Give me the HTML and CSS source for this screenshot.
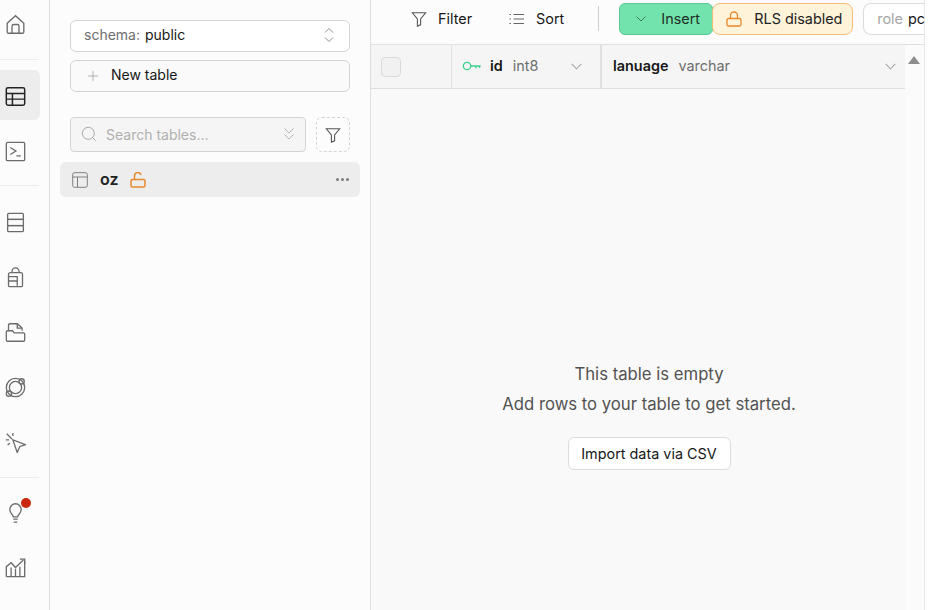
FILE: index.html
```html
<!DOCTYPE html>
<html lang="en">
<head>
<meta charset="utf-8">
<title>Table editor</title>
<link rel="stylesheet" href="styles.css">
</head>
<body>
<div class="app">
  <nav class="rail">
    <div class="rail-group first">
      <a class="rail-item"><svg viewBox="0 0 24 24" class="ri"><path d="M2.500 10.500 12 2l9.500 8.500V20.500a1.500 1.500 0 0 1-1.500 1.500H4a1.500 1.500 0 0 1-1.500-1.500z"/><path d="M8 22v-8a2 2 0 0 1 2-2h4a2 2 0 0 1 2 2v8"/></svg></a>
    </div>
    <div class="rail-group g2">
      <a class="rail-item active"><svg viewBox="0 0 24 24" class="ri dark"><rect x="1.500" y="2" width="21" height="20" rx="2"/><path d="M1.500 8.500h21M1.500 15h21M8.500 8.500V22"/></svg></a>
      <a class="rail-item"><svg viewBox="0 0 24 24" class="ri"><rect x="1.500" y="1.500" width="21" height="21" rx="1.500"/><path d="m6 7.500 6.500 4-6.500 4M13 17h5"/></svg></a>
    </div>
    <div class="rail-group g3">
      <a class="rail-item"><svg viewBox="0 0 24 24" class="ri"><rect x="3" y="1.500" width="18" height="7" rx="1.500"/><rect x="3" y="8.500" width="18" height="7"/><rect x="3" y="15.500" width="18" height="7" rx="1.500"/></svg></a>
      <a class="rail-item"><svg viewBox="0 0 24 24" class="ri"><path d="M8 6.500V5a4 4 0 0 1 8 0v1.500"/><path d="M4 21V8.500a2 2 0 0 1 2-2h12a2 2 0 0 1 2 2V21a1.500 1.500 0 0 1-1.500 1.500H5.500A1.500 1.500 0 0 1 4 21z"/><path d="M4 11h10v10.500M4 16h10"/></svg></a>
      <a class="rail-item"><svg viewBox="0 0 24 24" class="ri"><path d="M4 9V3.500A1.500 1.500 0 0 1 5.500 2H14l5.500 5v3"/><path d="M14 2v5h5.500"/><path d="M1.500 11.500A1.500 1.500 0 0 1 3 10h5.500l2 2.500H21a1.500 1.500 0 0 1 1.500 1.500v6.500A1.500 1.500 0 0 1 21 22H3a1.500 1.500 0 0 1-1.500-1.500z"/></svg></a>
      <a class="rail-item"><svg viewBox="0 0 24 24" class="ri"><circle cx="12" cy="12" r="10.500"/><circle cx="12" cy="12" r="7"/><circle cx="19" cy="5" r="3"/><circle cx="4.500" cy="19" r="3"/></svg></a>
      <a class="rail-item"><svg viewBox="0 0 24 24" class="ri"><path d="m9 9 14.500 5.500-6.500 2-3 7z"/><path d="M8 8 2 2M9 4.500V1M4.500 9H1M5.500 12.500 3 15"/></svg></a>
    </div>
    <div class="rail-group last">
      <a class="rail-item"><span class="bulb"><svg viewBox="0 0 24 24" class="ri"><path d="M9.500 17c0-2.500-4-4-4-8.500a6.500 6.500 0 0 1 13 0c0 4.500-4 6-4 8.500z"/><path d="M9.500 19.500h5M10 23h4"/></svg><i class="dot"></i></span></a>
      <a class="rail-item"><svg viewBox="0 0 24 24" class="ri"><path d="M1.500 22.500V11l5.500-4.500 5 5.500 9-8.500"/><path d="M1.500 22.500h21V5"/><path d="M17 2.500h5.500V8M7 22.500V12M12 22.500V13.500M17 22.500V11"/></svg></a>
    </div>
  </nav>

  <aside class="side">
    <div class="select"><span class="muted">schema:</span><span class="val">public</span>
      <svg viewBox="0 0 12 18" class="updown"><path d="m2 6.500 4-4 4 4M2 11.500l4 4 4-4"/></svg></div>
    <div class="new"><svg viewBox="0 0 14 14" class="plus"><path d="M7 1v12M1 7h12"/></svg><span>New table</span></div>
    <div class="search-row">
      <div class="search"><svg viewBox="0 0 16 16" class="mag"><circle cx="7.300" cy="7.300" r="6"/><path d="m11.800 11.800 3 3"/></svg><span>Search tables...</span>
        <svg viewBox="0 0 12 14" class="dbl"><path d="m1.500 1.500 4.500 4.500 4.500-4.500M1.500 7.500 6 12l4.500-4.500"/></svg></div>
      <div class="filter-btn"><svg viewBox="0 0 18 18" class="fil"><path d="M1.500 2h15l-5.700 7v6.500l-3.600 1.500V9z"/></svg></div>
    </div>
    <div class="tbl-row">
      <svg viewBox="0 0 16 16" class="tic"><rect x=".7" y=".7" width="14.600" height="14.600" rx="1.800"/><path d="M.7 5h14.600M5.500 5v10.300"/></svg>
      <span class="tname">oz</span>
      <svg viewBox="0 0 16 16" class="lock-o"><path d="M4.500 7.500V4a3.300 3.300 0 0 1 6.500-1"/><rect x="1" y="7.500" width="14" height="7.500" rx="1.500"/></svg>
      <span class="more"><i></i><i></i><i></i></span>
    </div>
  </aside>

  <main class="main">
    <header class="toolbar">
      <a class="tool"><svg viewBox="0 0 18 18" class="fil"><path d="M1.500 2h15l-5.700 7v6.500l-3.600 1.500V9z"/></svg>Filter</a>
      <a class="tool sort"><svg viewBox="0 0 16 12" class="lines"><path d="M4.500 1.500H15M4.500 6H15M4.500 10.500H15M.5 1.500h1.500M.5 6h1.500M.5 10.500h1.500"/></svg>Sort</a>
      <span class="sep"></span>
      <a class="insert"><svg viewBox="0 0 10 6" class="chev"><path d="m.5.5 4.500 4.500L9.500.5"/></svg>Insert</a>
      <a class="rls"><svg viewBox="0 0 16 16" class="lock-c"><path d="M4.500 7.500V4.500a3.500 3.500 0 0 1 7 0v3"/><rect x="1" y="7.500" width="14" height="7.500" rx="1.500"/></svg>RLS disabled</a>
      <a class="role"><span class="lab">role</span><span class="rv">pc</span></a>
    </header>
    <div class="grid-wrap">
      <div class="grid">
        <div class="thead">
          <div class="c-check"><span class="box"></span></div>
          <div class="c-id">
            <svg viewBox="0 0 20 10" class="key"><circle cx="5" cy="5" r="3.700"/><path d="M8.700 5h10M14 5v2.500M17.500 5v2"/></svg>
            <b>id</b><span class="type">int8</span>
            <svg viewBox="0 0 12 7" class="hchev"><path d="m.7.7 5.300 5.300L11.300.7"/></svg>
          </div>
          <div class="c-lang">
            <b>lanuage</b><span class="type">varchar</span>
            <svg viewBox="0 0 12 7" class="hchev"><path d="m.7.7 5.300 5.300L11.300.7"/></svg>
          </div>
        </div>
        <div class="empty">
          <p>This table is empty</p>
          <p>Add rows to your table to get started.</p>
          <button class="import">Import data via CSV</button>
        </div>
      </div>
      <div class="scroll"><span class="up"></span></div>
    </div>
  </main>
  <div class="edge"></div>
</div>
</body>
</html>
```

FILE: styles.css
```css
* { box-sizing: border-box; }
html, body { margin: 0; height: 100%; overflow: hidden; }
body { font-family: "Inter", "Liberation Sans", sans-serif; background: #fcfcfc; color: #171717; }
.app { display: flex; width: 928px; height: 610px; }

.rail { width: 50px; flex: none; border-right: 1px solid #dfdfdf; background: #fcfcfc; display: flex; flex-direction: column; }
.rail-group { display: flex; flex-direction: column; gap: 7px; border-bottom: 1px solid #ededed; margin-right: 10px; }
.rail-group.first { height: 60px; justify-content: flex-start; }
.rail-group.g2 { padding: 10px 0 10px; }
.rail-group.g3 { padding: 12px 0 11px; }
.rail-group.last { border-bottom: 0; padding-top: 10px; }
.rail-item { width: 40px; height: 48px; display: flex; align-items: center; justify-content: center; border-radius: 0 6px 6px 0; }
.rail-item.active { background: #ededed; height: 50px; padding-top: 2px; }
.ri { width: 21px; height: 21px; fill: none; stroke: #6b6b6b; stroke-width: 1.500; margin-left: -9px; }
.ri.dark { stroke: #232323; stroke-width: 1.700; }
.bulb { position: relative; display: block; width: 21px; height: 21px; margin-left: -9px; }
.bulb .ri { margin-left: 0; }
.dot { position: absolute; top: -4px; right: -5px; width: 10px; height: 10px; border-radius: 50%; background: #c9290f; }

.side { width: 321px; flex: none; border-right: 1px solid #dfdfdf; background: #fcfcfc; padding: 20px 10px 0; }
.select, .new { margin: 0 10px; height: 32px; border: 1px solid #d4d4d4; border-radius: 6px; display: flex; align-items: center; font-size: 14px; padding-bottom: 3px; }
.select { background: #fff; padding-left: 13px; padding-right: 14px; }
.muted { color: #6e6e6e; margin-right: 5px; }
.val { color: #171717; }
.updown { width: 12px; height: 18px; margin-left: auto; fill: none; stroke: #8f8f8f; stroke-width: 1; }
.new { margin-top: 8px; background: #fafafa; padding-left: 16px; padding-right: 16px; color: #171717; }
.plus { width: 12px; height: 12px; fill: none; stroke: #a8a8a8; stroke-width: 1; margin-right: 12px; margin-top: 3px; }
.search-row { display: flex; gap: 10px; margin: 25px 10px 0; }
.search { flex: 1; height: 35px; border: 1px solid #d4d4d4; border-radius: 4px; background: #f5f5f5; display: flex; align-items: center; padding: 0 10px 1px; color: #b0b0b0; font-size: 14px; }
.mag { width: 16px; height: 16px; fill: none; stroke: #a8a8a8; stroke-width: 1; margin-right: 9px; }
.dbl { width: 12px; height: 14px; margin-left: auto; fill: none; stroke: #b5b5b5; stroke-width: 1; }
.filter-btn { width: 34px; height: 35px; border: 1px dashed #d4d4d4; border-radius: 6px; display: flex; align-items: center; justify-content: center; }
.fil { width: 16px; height: 16px; fill: none; stroke: #555; stroke-width: 1.200; }
.tbl-row { height: 35px; margin-top: 10px; background: #ededed; border-radius: 6px; display: flex; align-items: center; padding: 0 11px 0 12px; }
.tic { width: 16px; height: 16px; fill: none; stroke: #808080; stroke-width: 1; }
.tname { font-size: 16px; font-weight: 600; margin-left: 12px; color: #222; padding-bottom: 2px; }
.lock-o { width: 16px; height: 16px; fill: none; stroke: #e8892c; stroke-width: 1.500; margin-left: 11px; }
.more { margin-left: auto; display: flex; gap: 2px; }
.more i { width: 3px; height: 3px; border-radius: 50%; background: #7d7d7d; }

.main { width: 553px; flex: none; display: flex; flex-direction: column; background: #f9f9f9; }
.toolbar { height: 45px; flex: none; border-bottom: 1px solid #e2e2e2; background: #fcfcfc; display: flex; align-items: center; padding: 0 0 7px 40px; font-size: 14.400px; white-space: nowrap; overflow: hidden; }
.tool { display: flex; align-items: center; gap: 11px; color: #171717; }
.tool.sort { margin-left: 37px; }
.lines { width: 16px; height: 12px; fill: none; stroke: #666; stroke-width: 1.200; }
.sep { width: 1px; height: 25px; background: #cfcfcf; margin: 0 20px 0 34px; flex: none; }
.insert { width: 94px; height: 32px; flex: none; background: #72e3ad; border: 1px solid #5cc796; border-radius: 6px; display: flex; align-items: center; padding-left: 16px; gap: 15px; color: #1f2f27; }
.chev { width: 10px; height: 6px; fill: none; stroke: #3b7d5c; stroke-width: 1; }
.rls { width: 141px; height: 32px; flex: none; margin-left: -1px; background: #fff3d9; border: 1px solid #f3bf77; border-radius: 8px; display: flex; align-items: center; padding-left: 13px; gap: 12px; color: #222; }
.lock-c { width: 16px; height: 16px; fill: none; stroke: #e8892c; stroke-width: 1.300; }
.role { flex: 1; height: 32px; margin-left: 10px; background: #fff; border: 1px solid #dcdcdc; border-radius: 8px 0 0 8px; border-right: 0; display: flex; align-items: center; padding-left: 13px; gap: 5px; overflow: hidden; }
.lab { color: #a6a6a6; }
.rv { color: #171717; }

.grid-wrap { flex: 1; min-height: 0; display: flex; }
.grid { width: 534px; flex: none; display: flex; flex-direction: column; }
.thead { height: 44px; flex: none; display: flex; background: #f5f5f5; border-bottom: 1px solid #dfdfdf; font-size: 14.400px; padding-bottom: 2px; }
.c-check { width: 81px; flex: none; border-right: 1px solid #e2e2e2; display: flex; align-items: center; padding-left: 10px; margin-bottom: -2px; }
.box { width: 20px; height: 20px; border: 1px solid #d9d9d9; border-radius: 4px; background: #f1f1f1; }
.c-id { width: 150px; flex: none; border-right: 2px solid #dfdfdf; margin-bottom: -2px; padding-bottom: 2px; display: flex; align-items: center; padding-right: 18px; padding-left: 10px; }
.c-lang { flex: 1; display: flex; align-items: center; padding: 0 9px 0 11px; }
.thead b { font-weight: 600; color: #171717; }
.type { color: #6e6e6e; margin-left: 10px; }
.key { width: 20px; height: 10px; margin-right: 8px; fill: none; stroke: #3ecf8e; stroke-width: 1.300; }
.hchev { width: 11px; height: 7px; margin-left: auto; fill: none; stroke: #a3a3a3; stroke-width: 1.100; margin-top: 2px; }
.empty { flex: 1; display: flex; flex-direction: column; align-items: center; padding: 270px 0 0 22px; color: #525252; font-size: 16.700px; }
.empty p { margin: 0; line-height: 30px; }
.import { margin-top: 18px; width: 163px; height: 33px; background: #fff; border: 1px solid #dcdcdc; border-radius: 6px; font: inherit; font-size: 14.400px; color: #171717; padding: 0; }
.scroll { width: 19px; flex: none; background: #fbfbfb; position: relative; }
.up { position: absolute; top: 11px; left: 3px; width: 0; height: 0; border-left: 6.500px solid transparent; border-right: 6.500px solid transparent; border-bottom: 8px solid #8d8d8d; }
.edge { width: 4px; flex: none; border-left: 1px solid #e8e8e8; background: #fff; }
```
